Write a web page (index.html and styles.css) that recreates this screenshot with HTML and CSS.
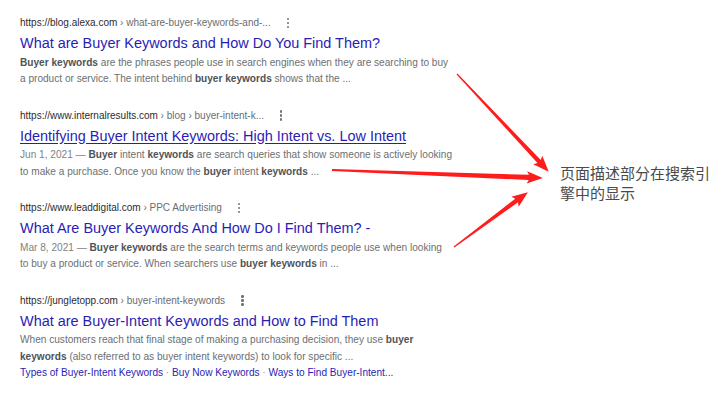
FILE: index.html
```html
<!DOCTYPE html>
<html lang="en">
<head>
<meta charset="utf-8">
<title>Buyer keywords search results</title>
<link rel="stylesheet" href="styles.css">
</head>
<body>
<div class="page">
  <main class="results">
    <section class="result">
      <div class="cite"><span class="host">https://blog.alexa.com</span><span class="crumb"> › what-are-buyer-keywords-and-...</span><span class="more"><i></i><i></i><i></i></span></div>
      <a class="title" href="#">What are Buyer Keywords and How Do You Find Them?</a>
      <p class="snippet"><b>Buyer keywords</b> are the phrases people use in search engines when they are searching to buy<br>a product or service. The intent behind <b>buyer keywords</b> shows that the ...</p>
    </section>
    <section class="result">
      <div class="cite"><span class="host">https://www.internalresults.com</span><span class="crumb"> › blog › buyer-intent-k...</span><span class="more"><i></i><i></i><i></i></span></div>
      <a class="title underlined" href="#">Identifying Buyer Intent Keywords: High Intent vs. Low Intent</a>
      <p class="snippet"><span class="date">Jun 1, 2021 — </span><b>Buyer</b> intent <b>keywords</b> are search queries that show someone is actively looking<br>to make a purchase. Once you know the <b>buyer</b> intent <b>keywords</b> ...</p>
    </section>
    <section class="result">
      <div class="cite"><span class="host">https://www.leaddigital.com</span><span class="crumb"> › PPC Advertising</span><span class="more"><i></i><i></i><i></i></span></div>
      <a class="title" href="#">What Are Buyer Keywords And How Do I Find Them? -</a>
      <p class="snippet"><span class="date">Mar 8, 2021 — </span><b>Buyer keywords</b> are the search terms and keywords people use when looking<br>to buy a product or service. When searchers use <b>buyer keywords</b> in ...</p>
    </section>
    <section class="result">
      <div class="cite"><span class="host">https://jungletopp.com</span><span class="crumb"> › buyer-intent-keywords</span><span class="more"><i></i><i></i><i></i></span></div>
      <a class="title" href="#">What are Buyer-Intent Keywords and How to Find Them</a>
      <p class="snippet">When customers reach that final stage of making a purchasing decision, they use <b>buyer</b><br><b>keywords</b> (also referred to as buyer intent keywords) to look for specific ...</p>
      <div class="sitelinks"><a href="#">Types of Buyer-Intent Keywords</a><span class="sep"> · </span><a href="#">Buy Now Keywords</a><span class="sep"> · </span><a href="#">Ways to Find Buyer-Intent...</a></div>
    </section>
  </main>
  <aside class="note">页面描述部分在搜索引<br>擎中的显示</aside>
  <svg class="arrows" width="721" height="398" viewBox="0 0 721 398" aria-hidden="true">
    <g fill="#ff1c1c">
      <polygon transform="translate(457 74) rotate(46.8)" points="0,-0.6 120,-2.3 118,-6.2 134,0 118,6.2 120,2.3 0,0.6"/>
      <polygon transform="translate(332 170) rotate(2.17)" points="0,-0.9 197,-2.6 195,-6.2 211,0 195,6.2 197,2.6 0,0.9"/>
      <polygon transform="translate(454 247) rotate(-36.6)" points="0,-0.6 78,-2.3 76,-6.2 92,0 76,6.2 78,2.3 0,0.6"/>
    </g>
  </svg>
</div>
</body>
</html>
```
FILE: styles.css
```css
html, body {
  margin: 0;
  padding: 0;
  background: #ffffff;
}

.page {
  position: relative;
  width: 721px;
  height: 398px;
  display: flex;
  font-family: "Liberation Sans", Arial, sans-serif;
  overflow: hidden;
}

.results {
  width: 520px;
  padding: 15px 0 0 20px;
  display: flex;
  flex-direction: column;
  gap: 20px;
}

.result {
  display: flex;
  flex-direction: column;
  align-items: flex-start;
}

.cite {
  font-size: 10px;
  line-height: 16px;
  height: 16px;
  display: flex;
  align-items: center;
  white-space: pre;
}

.host {
  color: #2b2c2f;
}

.crumb {
  color: #6a6d72;
}

.more {
  display: flex;
  flex-direction: column;
  gap: 1.5px;
  margin-left: 16px;
}

.more i {
  display: block;
  width: 2.4px;
  height: 2.4px;
  border-radius: 50%;
  background: #6f7377;
}

.title {
  margin-top: 2px;
  font-size: 14.45px;
  line-height: 20px;
  color: #2a1db5;
  text-decoration: none;
  white-space: nowrap;
}

.title.underlined {
  text-decoration: underline;
  text-underline-offset: 2px;
}

.snippet {
  margin: 1.5px 0 0;
  font-size: 10.1px;
  line-height: 16.5px;
  color: #6b6f73;
  white-space: nowrap;
}

.snippet b {
  color: #4f5357;
  font-weight: bold;
}

.date {
  color: #7d8186;
}

.sitelinks {
  font-size: 10.1px;
  line-height: 16px;
  white-space: pre;
}

.sitelinks a {
  color: #2a1db5;
  text-decoration: none;
}

.sitelinks .sep {
  color: #8a8e92;
}

.note {
  margin-top: 163px;
  margin-left: 20px;
  font-family: "Noto Sans CJK SC", "Noto Sans", sans-serif;
  font-size: 15px;
  line-height: 20px;
  color: #4a4a4a;
  align-self: flex-start;
}

.arrows {
  position: absolute;
  left: 0;
  top: 0;
  pointer-events: none;
}
```
